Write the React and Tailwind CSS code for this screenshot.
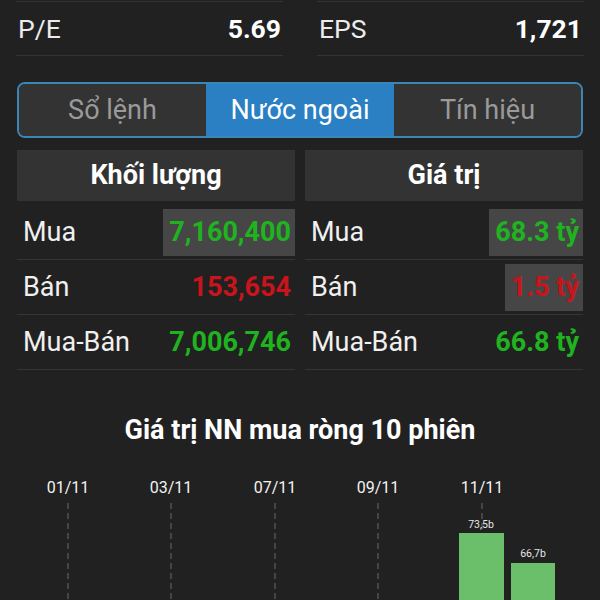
import React from 'react';

const font = { fontFamily: 'Roboto, "Noto Sans", sans-serif' };

// Top stat cell (P/E, EPS)
function Stat({ label, value }) {
  return (
    <div className="flex h-[55px] items-center justify-between border-t border-b border-[#343434] px-[2px]">
      <span className="text-[26.5px] text-[#ececec]">{label}</span>
      <span className="text-[26.5px] font-bold text-white">{value}</span>
    </div>
  );
}

function Row({ label, value, color, boxed }) {
  return (
    <div className="flex h-[55px] items-center justify-between border-b border-[#353535] py-[4px]">
      <span className="pl-[6px] text-[27px] text-[#f0f0f0]">{label}</span>
      <span
        className={
          'flex h-[47px] items-center pr-[4px] pl-[6px] text-[27px] font-bold ' +
          color +
          (boxed ? ' bg-[#464646]' : '')
        }
      >
        {value}
      </span>
    </div>
  );
}

function Table({ title, rows }) {
  return (
    <div className="flex flex-col">
      <div className="flex h-[51px] items-center justify-center bg-[#333333] text-[27px] font-bold text-white">
        {title}
      </div>
      <div className="mt-[4px] flex flex-col">
        {rows.map((r) => (
          <Row key={r.label} {...r} />
        ))}
      </div>
    </div>
  );
}

const GREEN = 'text-[#1fb41f]';
const RED = 'text-[#c8141b]';

const dates = [
  { x: 68, t: '01/11' },
  { x: 171, t: '03/11' },
  { x: 275, t: '07/11' },
  { x: 378, t: '09/11' },
  { x: 482, t: '11/11' },
];

function Chart() {
  return (
    <svg width="600" height="160" className="block">
      {dates.map((d) => (
        <g key={d.t}>
          <text x={d.x} y="38" fill="#f2f2f2" fontSize="16" textAnchor="middle" fontFamily="Roboto, sans-serif">
            {d.t}
          </text>
          <line x1={d.x} y1="48" x2={d.x} y2="160" stroke="#6a6a6a" strokeWidth="1" strokeDasharray="6 4" />
        </g>
      ))}
      <text x="481" y="73" fill="#e6e6e6" fontSize="10.5" textAnchor="middle" fontFamily="Roboto, sans-serif">
        73,5b
      </text>
      <rect x="459" y="78" width="45" height="82" fill="#6cbf6a" />
      <text x="533" y="102" fill="#e6e6e6" fontSize="10.5" textAnchor="middle" fontFamily="Roboto, sans-serif">
        66,7b
      </text>
      <rect x="511" y="108" width="44" height="52" fill="#6cbf6a" />
    </svg>
  );
}

export default function App() {
  return (
    <div className="h-[600px] w-[600px] overflow-hidden bg-[#212121]" style={font}>
      <div className="grid grid-cols-2 gap-[34px] px-4 pt-[1px]">
        <Stat label="P/E" value="5.69" />
        <Stat label="EPS" value="1,721" />
      </div>

      <div className="mx-[17px] mt-[26px] flex h-[56px] overflow-hidden rounded-lg border-2 border-[#3b86b5]">
        <div className="flex flex-1 items-center justify-center bg-[#333333] text-[27px] text-[#9a9a9a]">Sổ lệnh</div>
        <div className="flex w-[188px] items-center justify-center bg-[#2a80c2] text-[27px] text-white">Nước ngoài</div>
        <div className="flex flex-1 items-center justify-center bg-[#333333] text-[27px] text-[#9a9a9a]">Tín hiệu</div>
      </div>

      <div className="mx-[17px] mt-[12px] grid grid-cols-2 gap-[10px]">
        <Table
          title="Khối lượng"
          rows={[
            { label: 'Mua', value: '7,160,400', color: GREEN, boxed: true },
            { label: 'Bán', value: '153,654', color: RED },
            { label: 'Mua-Bán', value: '7,006,746', color: GREEN },
          ]}
        />
        <Table
          title="Giá trị"
          rows={[
            { label: 'Mua', value: '68.3 tỷ', color: GREEN, boxed: true },
            { label: 'Bán', value: '1.5 tỷ', color: RED, boxed: true },
            { label: 'Mua-Bán', value: '66.8 tỷ', color: GREEN },
          ]}
        />
      </div>

      <div className="mt-[40px] text-center text-[27px] font-bold text-white">Giá trị NN mua ròng 10 phiên</div>
      <div className="mt-[4px]">
        <Chart />
      </div>
    </div>
  );
}
